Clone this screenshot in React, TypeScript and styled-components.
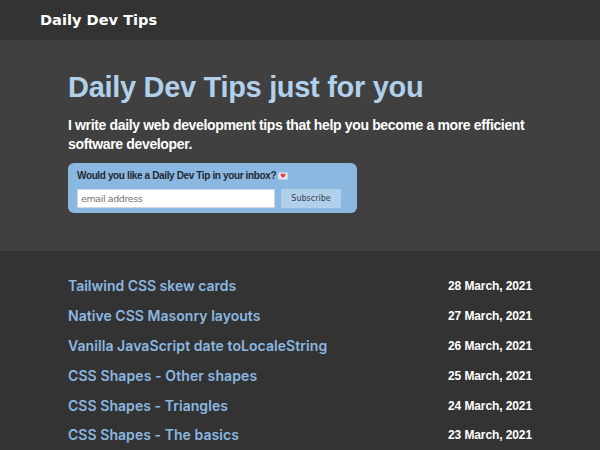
import React from "react";
import styled, { createGlobalStyle } from "styled-components";

const GlobalStyle = createGlobalStyle`
  * { box-sizing: border-box; }
  html, body { margin: 0; padding: 0; height: 450px; overflow: hidden; background: #333333; }
  body { font-family: "Liberation Sans", sans-serif; font-weight: 700; color: #fff; }
`;

const Header = styled.header`
  height: 40px;
  padding-left: 40px;
  display: flex;
  align-items: center;
  background: #333333;
`;

const Brand = styled.a`
  font: 700 14.6px/20px "DejaVu Sans", sans-serif;
  letter-spacing: 0;
  white-space: nowrap;
`;

const Hero = styled.section`
  height: 211px;
  padding: 27px 68px 0;
  background: #404040;
`;

const Title = styled.h1`
  margin: 0;
  font-size: 29px;
  line-height: 40px;
  letter-spacing: -0.31px;
  color: #b1d0eb;
  white-space: nowrap;
`;

const Lead = styled.p`
  margin: 9px 0 0;
  font-size: 14px;
  line-height: 19px;
  letter-spacing: -0.35px;
  white-space: nowrap;
`;

const Signup = styled.form`
  width: 289px;
  height: 50px;
  margin-top: 9px;
  padding: 7px 9px 0;
  border-radius: 6px;
  background: #8bb8e1;
`;

const SignupLabel = styled.label`
  display: flex;
  align-items: center;
  gap: 2px;
  height: 12px;
  font-size: 10px;
  line-height: 12px;
  letter-spacing: -0.37px;
  color: #222a33;
  white-space: nowrap;
`;

const Fields = styled.div`
  display: flex;
  gap: 6px;
  margin-top: 7px;
`;

const Email = styled.input`
  width: 198px;
  height: 19px;
  padding: 0 3px;
  border: 1px solid #cbd7e3;
  border-radius: 0;
  background: #fff;
  font: 400 9.5px "DejaVu Sans", sans-serif;
  letter-spacing: -0.4px;
  outline: none;
  &::placeholder { color: #757575; opacity: 1; }
`;

const Submit = styled.button`
  width: 60px;
  height: 19px;
  padding: 0;
  border: 0;
  border-radius: 2px;
  background: #b1d0eb;
  color: #333f4d;
  font: 400 8px "DejaVu Sans", sans-serif;
`;

const Posts = styled.main`
  padding: 20px 68px 0;
`;

const Post = styled.article`
  height: 29.9px;
  display: flex;
  justify-content: space-between;
  align-items: center;
`;

const PostLink = styled.a<{ $tracking: number }>`
  font: 600 14px/20px Inter, sans-serif;
  letter-spacing: ${(p) => p.$tracking}px;
  color: #8bb8e1;
  white-space: nowrap;
`;

const PostDate = styled.time`
  font-size: 12px;
  line-height: 20px;
  letter-spacing: -0.1px;
  white-space: nowrap;
`;

const LoveLetter = () => (
  <svg width="10" height="8" viewBox="0 0 10 8" aria-hidden="true">
    <rect x="0.3" y="0.5" width="9.4" height="7" rx="0.6" fill="#e9e4e8" />
    <path d="M.5 1 5 4.8 9.5 1M.6 7.2 3.5 4M9.4 7.2 6.5 4" fill="none" stroke="#c3c5d0" strokeWidth=".5" />
    <path d="M5 6 2.9 3.7C2.1 2.7 3 1.5 4 1.6c.5 0 .8.3 1 .7.2-.4.5-.7 1-.7 1-.1 1.9 1.1 1.1 2.1Z" fill="#df3d50" />
  </svg>
);

const posts = [
  { title: "Tailwind CSS skew cards", date: "28 March, 2021", tracking: -0.02 },
  { title: "Native CSS Masonry layouts", date: "27 March, 2021", tracking: 0.04 },
  { title: "Vanilla JavaScript date toLocaleString", date: "26 March, 2021", tracking: 0.07 },
  { title: "CSS Shapes - Other shapes", date: "25 March, 2021", tracking: 0.1 },
  { title: "CSS Shapes - Triangles", date: "24 March, 2021", tracking: 0.05 },
  { title: "CSS Shapes - The basics", date: "23 March, 2021", tracking: 0.05 },
];

export default function App() {
  return (
    <>
      <GlobalStyle />
      <Header>
        <Brand>Daily Dev Tips</Brand>
      </Header>
      <Hero>
        <Title>Daily Dev Tips just for you</Title>
        <Lead>
          I write daily web development tips that help you become a more efficient
          <br />
          software developer.
        </Lead>
        <Signup>
          <SignupLabel htmlFor="email">
            Would you like a Daily Dev Tip in your inbox?
            <LoveLetter />
          </SignupLabel>
          <Fields>
            <Email id="email" type="email" placeholder="email address" />
            <Submit type="button">Subscribe</Submit>
          </Fields>
        </Signup>
      </Hero>
      <Posts>
        {posts.map((post) => (
          <Post key={post.title}>
            <PostLink $tracking={post.tracking}>{post.title}</PostLink>
            <PostDate>{post.date}</PostDate>
          </Post>
        ))}
      </Posts>
    </>
  );
}
